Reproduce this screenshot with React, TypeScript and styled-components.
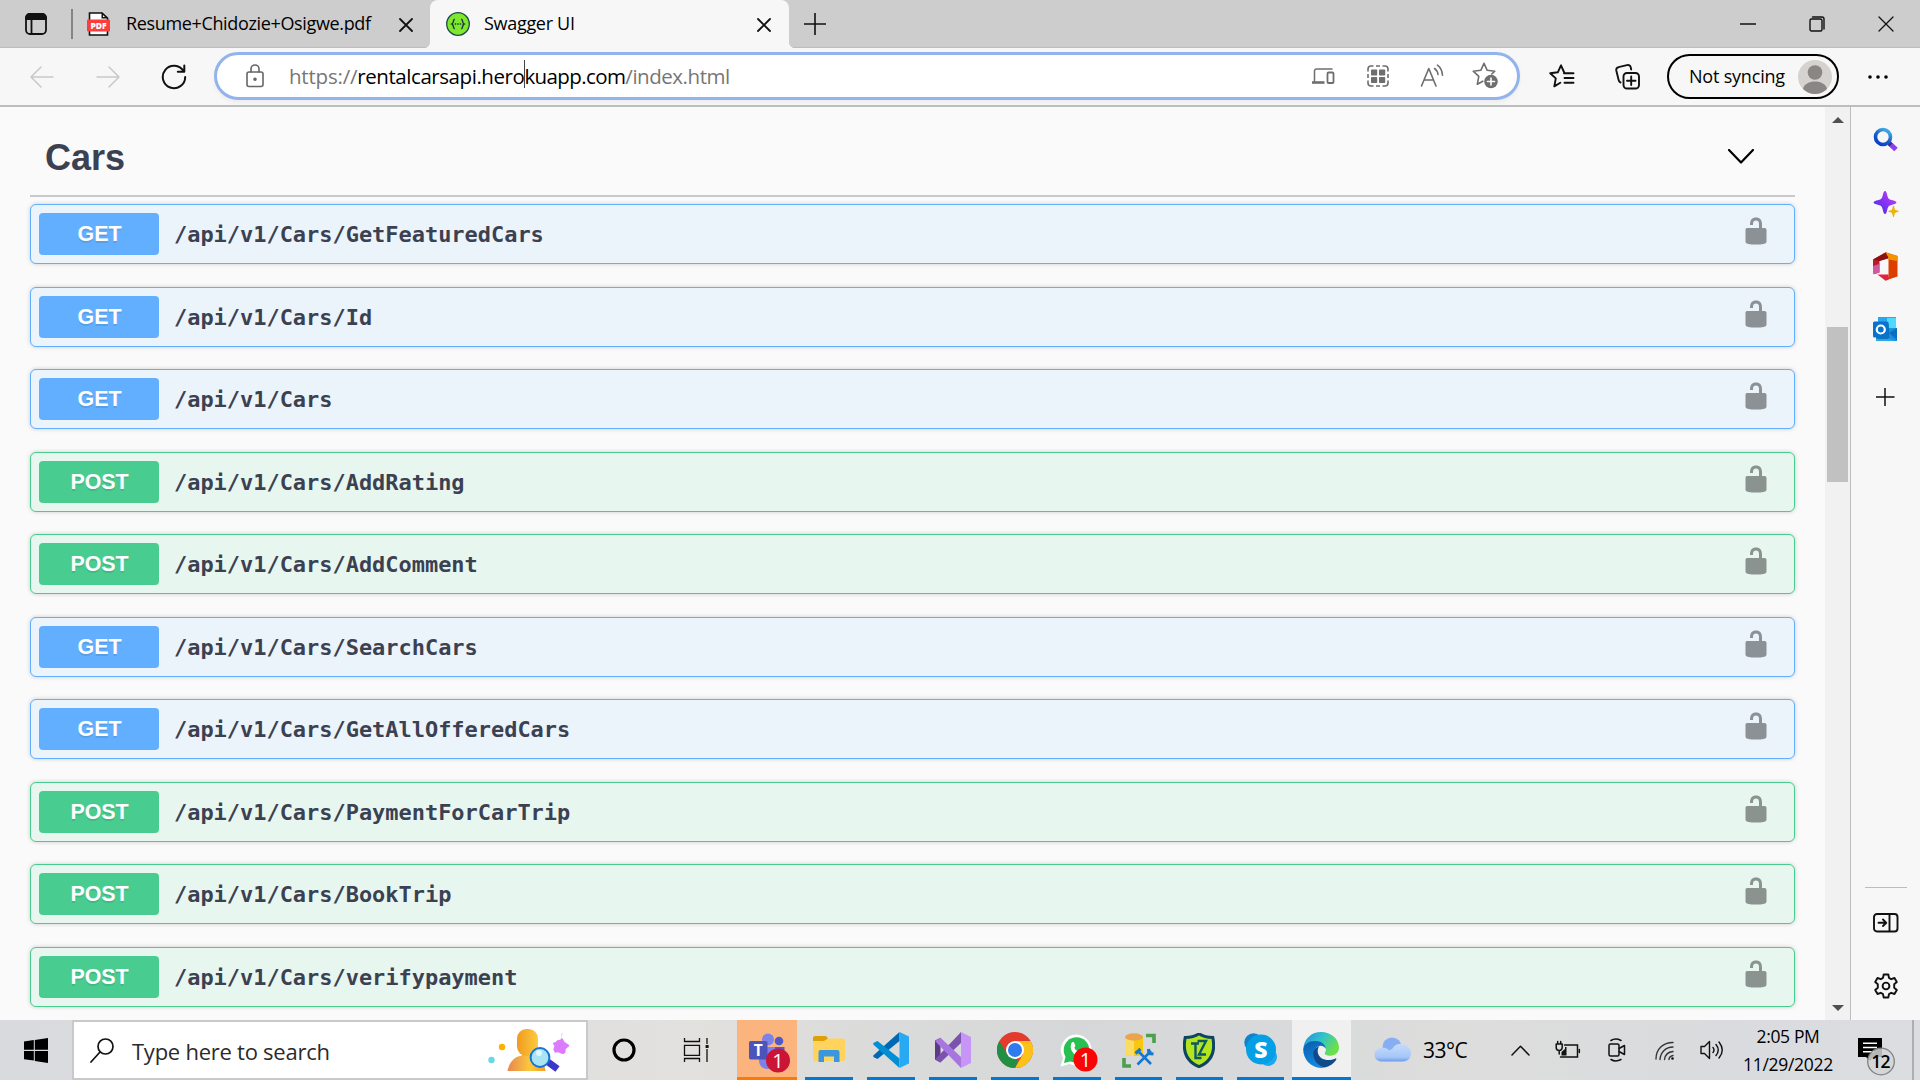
import React from "react";
import styled, { createGlobalStyle } from "styled-components";

const ui = `"Open Sans", "Noto Sans", sans-serif`;

const GlobalStyle = createGlobalStyle`
  *, *::before, *::after { box-sizing: border-box; }
  body { margin: 0; background: #fafafa; overflow: hidden; }
  svg { display: block; flex: none; }
`;

const Screen = styled.div`
  width: 1920px;
  height: 1080px;
  display: grid;
  grid-template-columns: 1920px;
  grid-template-rows: 48px 59px 913px 60px;
  font-family: ${ui};
  color: #000;
  overflow: hidden;
`;

const Slot = styled.div<{ $w: number; $drop?: number }>`
  width: ${(p) => p.$w}px;
  height: 100%;
  padding-top: ${(p) => p.$drop ?? 0}px;
  flex: none;
  display: flex;
  align-items: center;
  justify-content: center;
`;

const Label = styled.span<{ $size: number; $track?: number; $color?: string; $drop?: number }>`
  font-size: ${(p) => p.$size}px;
  letter-spacing: ${(p) => p.$track ?? 0}px;
  color: ${(p) => p.$color ?? "#000"};
  padding-top: ${(p) => p.$drop ?? 0}px;
  line-height: 1.3;
  white-space: pre;
`;

/* ---------- tab strip ---------- */

const TabStrip = styled.header`
  display: flex;
  align-items: center;
  background: #cdcdcd;
  box-shadow: inset 0 -2px 1px -1px #bcbcbc;
`;

const Divider = styled.div`
  width: 2px;
  height: 30px;
  background: #848484;
`;

const Tab = styled.div<{ $w: number; $active?: boolean; $pad: string; $gap: number }>`
  position: relative;
  width: ${(p) => p.$w}px;
  height: 48px;
  padding: ${(p) => p.$pad};
  display: flex;
  align-items: center;
  gap: ${(p) => p.$gap}px;
  border-radius: 8px 8px 0 0;
  background: ${(p) => (p.$active ? "#f7f7f7" : "transparent")};
  & > svg:last-child { margin-left: auto; margin-top: 2px; }
  ${(p) =>
    p.$active &&
    `&::before, &::after {
      content: "";
      position: absolute;
      bottom: 0;
      width: 5px;
      height: 5px;
    }
    &::before { left: -5px; background: radial-gradient(circle at 0 0, transparent 4.5px, #f7f7f7 5px); }
    &::after { right: -5px; background: radial-gradient(circle at 100% 0, transparent 4.5px, #f7f7f7 5px); }`}
`;

const Spacer = styled.div`
  flex: 1;
`;

/* ---------- toolbar ---------- */

const Toolbar = styled.nav`
  display: flex;
  align-items: center;
  padding-left: 9px;
  background: #f7f7f7;
  border-bottom: 2px solid #bdbdbd;
`;

const AddressBar = styled.div`
  width: 1306px;
  height: 48px;
  margin: 0 9px 2px 7px;
  padding: 0 5px 0 29px;
  display: flex;
  align-items: center;
  background: #fff;
  border: 3px solid #92b4ee;
  border-radius: 24px;
  box-shadow: 0 2px 4px rgba(0, 0, 0, 0.05);
`;

const Url = styled.div`
  flex: 1;
  display: flex;
  align-items: center;
  margin-left: 25px;
`;

const Caret = styled.i`
  width: 1px;
  height: 28px;
  margin: 0 -1px 3px 0;
  background: #444;
`;

const Profile = styled.div`
  width: 172px;
  height: 45px;
  display: flex;
  align-items: center;
  justify-content: space-between;
  padding: 0 5px 0 20px;
  border: 2px solid #000;
  border-radius: 23px;
  margin-left: 6px;
`;

/* ---------- page ---------- */

const Body = styled.main`
  display: flex;
  background: #fafafa;
`;

const Page = styled.section`
  width: 1825px;
  padding: 0 30px;
  overflow: hidden;
`;

const TagHeader = styled.div`
  height: 90px;
  display: flex;
  align-items: center;
  justify-content: space-between;
  padding: 10px 41px 0 15px;
  border-bottom: 2px solid #c8c8cf;
`;

const TagTitle = styled.h3`
  margin: 4px 0 0;
  font: bold 36px "Liberation Sans", Arial, sans-serif;
  color: #3b4151;
`;

const Operations = styled.div`
  display: flex;
  flex-direction: column;
  gap: 22.5px;
  padding-top: 7px;
`;

const Operation = styled.div<{ $post: boolean }>`
  height: 60px;
  display: flex;
  align-items: center;
  padding: 0 23px 0 8px;
  border: 1px solid ${(p) => (p.$post ? "#49cc90" : "#61affe")};
  border-radius: 6px;
  background: ${(p) => (p.$post ? "#e8f6f0" : "#ebf3fb")};
  box-shadow: 0 0 4px rgba(0, 0, 0, 0.19);
  & > svg { margin: -6px 0 0 auto; }
`;

const Method = styled.span<{ $post: boolean }>`
  width: 120px;
  height: 42px;
  padding: 1px 0 0 1px;
  display: flex;
  align-items: center;
  justify-content: center;
  border-radius: 4px;
  background: ${(p) => (p.$post ? "#49cc90" : "#61affe")};
  color: #fff;
  font: bold 21.4px "Liberation Sans", Arial, sans-serif;
  text-shadow: 0 2px 0 rgba(0, 0, 0, 0.1);
`;

const Path = styled.span`
  margin-left: 15px;
  padding-top: 1px;
  font: bold 21.95px "DejaVu Sans Mono", monospace;
  color: #3b4151;
`;

const Scrollbar = styled.div`
  width: 25px;
  padding: 10px 2px 9px;
  display: flex;
  flex-direction: column;
  align-items: center;
  background: #f1f1f1;
`;

const Thumb = styled.div`
  width: 21px;
  height: 155px;
  margin: 204px 0 auto;
  background: #c1c1c1;
`;

const Sidebar = styled.aside`
  width: 70px;
  display: flex;
  flex-direction: column;
  align-items: center;
  padding: 20px 0 20px 0;
  border-left: 1px solid #bdbdbd;
  background: #f7f7f7;
`;

const SideItem = styled.div<{ $h?: number }>`
  height: ${(p) => p.$h ?? 63}px;
  display: flex;
  align-items: flex-start;
  justify-content: center;
`;

const SideRule = styled.div`
  width: 42px;
  height: 1px;
  margin: auto 0 25px;
  background: #bdbdbd;
`;

/* ---------- taskbar ---------- */

const Taskbar = styled.footer`
  display: flex;
  align-items: center;
  background: linear-gradient(90deg, #d8dade 0, #dddee0 24%, #e3e1de 36%, #dcdcdb 43%, #d6d7d9 56%, #d9dadb 68%, #dddddc 76%, #d9dbde 90%, #dcdde0 100%);
`;

const SearchBox = styled.div`
  width: 516px;
  height: 60px;
  padding: 0 16px;
  display: flex;
  align-items: center;
  gap: 18px;
  background: #fff;
  border: 2px solid #c9c9c9;
  & > svg:last-child { margin-left: auto; }
`;

const TaskButton = styled.div<{ $w: number; $ml?: number; $bg?: string; $bar?: string; $pad?: string }>`
  width: ${(p) => p.$w}px;
  height: 60px;
  margin-left: ${(p) => p.$ml ?? 14}px;
  padding: ${(p) => p.$pad ?? "0"};
  flex: none;
  display: flex;
  align-items: center;
  justify-content: center;
  background: ${(p) => p.$bg ?? "transparent"};
  box-shadow: inset 0 -3px 0 ${(p) => p.$bar ?? "#0078d7"};
`;

const Weather = styled.div`
  width: 145px;
  padding-left: 23px;
  display: flex;
  align-items: center;
  gap: 11px;
`;

const Clock = styled.div`
  width: 106px;
  display: flex;
  flex-direction: column;
  align-items: center;
  gap: 5px;
`;

const DesktopEdge = styled.div`
  width: 8px;
  height: 60px;
  border-left: 2px solid #acaeb1;
`;

/* ---------- drawings ---------- */

type IcoProps = { w: number; h: number; sw?: number; color?: string; children: React.ReactNode };
const Ico = ({ w, h, sw = 1.6, color = "#111", children }: IcoProps) => (
  <svg width={w} height={h} viewBox={`0 0 ${w} ${h}`} fill="none" stroke={color} strokeWidth={sw} strokeLinecap="round" strokeLinejoin="round">
    {children}
  </svg>
);

const Cross = ({ s = 14, sw = 1.8 }) => (
  <Ico w={s} h={s} sw={sw}><path d={`M1 1L${s - 1} ${s - 1}M${s - 1} 1L1 ${s - 1}`} /></Ico>
);

const WorkspaceIcon = () => (
  <Ico w={22} h={22} sw={1.8}>
    <rect x="1" y="1" width="20" height="20" rx="4" />
    <path d="M1 6V5a4 4 0 0 1 4-4h12a4 4 0 0 1 4 4v1z" fill="#111" />
    <path d="M6.5 6v15" />
  </Ico>
);

const PdfIcon = () => (
  <svg width="23" height="24" viewBox="0 0 23 24">
    <path d="M2.5 1H15l5.5 5v17h-18z" fill="#fff" stroke="#111" strokeWidth="1.6" />
    <path d="M14.5 0v6.5H21z" fill="#111" />
    <path d="M16 3l2 2h-2z" fill="#fff" />
    <rect x="0" y="7.5" width="23" height="12" rx="1" fill="#fb3d3d" />
    <text x="11.5" y="16.5" textAnchor="middle" fontFamily="Open Sans" fontWeight="800" fontSize="8.5" fill="#fff">PDF</text>
  </svg>
);

const SwaggerIcon = () => (
  <svg width="24" height="24" viewBox="0 0 24 24" fill="none">
    <circle cx="12" cy="12" r="11.3" fill="#80e82c" stroke="#1c4a4a" strokeWidth="1.3" />
    <path d="M8.8 7.3C6.6 7.200 8.300 11 6 12c2.300 1 .6 4.800 2.800 4.700M15.200 7.300c2.200-.1.500 3.700 2.800 4.700-2.300 1-.6 4.800-2.800 4.700" stroke="#173647" strokeWidth="1.5" />
    <path d="M8.8 12h6.800" stroke="#173647" strokeWidth="1.5" strokeDasharray="1.4 1.1" />
  </svg>
);

const BackIcon = () => <Ico w={24} h={22} sw={1.5} color="#c9c9c9"><path d="M23 11H1.5M11 1L1 11l10 10" /></Ico>;
const ForwardIcon = () => <Ico w={24} h={22} sw={1.5} color="#c9c9c9"><path d="M1 11h21.5M13 1l10 10-10 10" /></Ico>;
const ReloadIcon = () => (
  <Ico w={26} h={26} sw={2}><path d="M22.6 7.2A11.2 11.2 0 1 0 24.2 13M23.3 1.5v6.2h-6.5" /></Ico>
);
const PadlockIcon = () => (
  <Ico w={18} h={24} sw={1.6} color="#666">
    <rect x="1" y="8" width="16" height="14.5" rx="2" /><path d="M5 8V5a4 4 0 0 1 8 0v3" />
    <circle cx="9" cy="15.2" r="1" fill="#666" />
  </Ico>
);
const DevicesIcon = () => (
  <Ico w={24} h={18} sw={1.8} color="#6e6e6e">
    <path d="M21 2H5.500a2 2 0 0 0-2 2v10" strokeWidth="1.500" />
    <path d="M1 15.500h12.500" strokeWidth="2.600" strokeLinecap="butt" />
    <rect x="16.500" y="5.500" width="6" height="10.500" rx="1" />
  </Ico>
);
const GridIcon = () => (
  <svg width="24" height="24" viewBox="0 0 24 24" fill="none" stroke="#6e6e6e" strokeWidth="1.600">
    <path d="M7.500 2H5a3 3 0 0 0-3 3v2.500M16.500 2H19a3 3 0 0 1 3 3v2.500M7.500 22H5a3 3 0 0 1-3-3v-2.500M16.500 22H19a3 3 0 0 0 3-3v-2.500M10 2h4M10 22h4M2 10v4M22 10v4" />
    <g fill="#6e6e6e" stroke="none">
      <rect x="5" y="5.500" width="6.200" height="6" rx=".8" /><rect x="13" y="5.500" width="6.200" height="6" rx=".8" />
      <rect x="5" y="13" width="6.200" height="6" rx=".8" /><rect x="13" y="13" width="6.200" height="6" rx=".8" />
    </g>
  </svg>
);
const ReadAloudIcon = () => (
  <Ico w={24} h={24} sw={1.6} color="#6e6e6e">
    <path d="M1.500 22L8.800 4.500 16 22M4 16h9.600M14.500 4.500q3 2 3.500 6M17.500 1.200q4.500 3.500 5 10" />
  </Ico>
);
const StarPlusIcon = () => (
  <Ico w={27} h={27} sw={1.6} color="#6e6e6e">
    <path d="M12 1.300l3.200 7 7.600.9-3 2.800M12 1.300l-3.200 7-7.600.9 5.600 5.200-1.500 7.800 5.500-3" />
    <circle cx="19" cy="19.500" r="6.800" fill="#6e6e6e" stroke="none" />
    <path d="M19 16v7M15.500 19.500h7" stroke="#fff" />
  </Ico>
);
const FavouritesIcon = () => (
  <Ico w={26} h={25} sw={1.900}>
    <path d="M15.200 8.500L12 1.300l-3.200 7-7.600.9 5.600 5.200-1.500 8 6-3.600M15 9.300h9.500M15.500 14h9M15.500 18.700h9" />
  </Ico>
);
const CollectionsIcon = () => (
  <Ico w={26} h={26} sw={1.900}>
    <rect x="8.500" y="9" width="15.500" height="15.500" rx="3.500" />
    <path d="M16.200 12.500v8.500M12 16.800h8.500M5.500 18.500C4 18 3.800 17 3.500 15.500L1.300 6.500C1 4.500 2 3.500 3.500 3.200L12 1.200c2-.5 3.300.4 3.700 2l.5 2.300" />
  </Ico>
);
const Avatar = () => (
  <svg width="34" height="34" viewBox="0 0 34 34">
    <circle cx="17" cy="17" r="17" fill="#d5d2cf" />
    <circle cx="17" cy="12.500" r="7.300" fill="#8a8683" />
    <path d="M5 29c1.500-10 22.500-10 24 0a17 17 0 0 1-24 0z" fill="#8a8683" />
  </svg>
);
const DotsIcon = () => (
  <svg width="20" height="4" viewBox="0 0 20 4"><circle cx="2" cy="2" r="1.800" /><circle cx="10" cy="2" r="1.800" /><circle cx="18" cy="2" r="1.800" /></svg>
);

const UnlockIcon = () => (
  <svg width="30" height="30" viewBox="0 0 20 20" opacity="0.4">
    <path d="M15.8 8H14V5.6C14 2.703 12.665 1 10 1 7.334 1 6 2.703 6 5.6V6h2v-.801C8 3.754 8.797 3 10 3c1.203 0 2 .754 2 2.199V8H4c-.553 0-1 .646-1 1.199V17c0 .549.428 1.139.951 1.307l1.197.387C5.672 18.861 6.55 19 7.1 19h5.8c.549 0 1.428-.139 1.951-.307l1.196-.387c.524-.167.953-.757.953-1.306V9.199C17 8.646 16.352 8 15.8 8z" />
  </svg>
);

const SideSearch = () => (
  <svg width="26" height="25" viewBox="0 0 26 25">
    <defs>
      <linearGradient id="ring" x1="0" y1="1" x2=".6" y2="0"><stop offset="0" stopColor="#0a35c4" /><stop offset=".6" stopColor="#1565d0" /><stop offset="1" stopColor="#41a4dd" /></linearGradient>
    </defs>
    <path d="M16 16l7 6.500" stroke="#8a3ff0" strokeWidth="5" strokeLinecap="butt" />
    <path d="M16 16l2 2" stroke="#3d2a8c" strokeWidth="4" />
    <circle cx="10" cy="10" r="7.500" fill="#f7f7f7" stroke="url(#ring)" strokeWidth="3.600" />
  </svg>
);
const SideSparkle = () => (
  <svg width="26" height="26" viewBox="0 0 26 26">
    <defs><linearGradient id="spark" x1="0" y1="1" x2="1" y2="0"><stop offset="0" stopColor="#3a2bf0" /><stop offset="1" stopColor="#d13bf5" /></linearGradient></defs>
    <path d="M12 0c1 0 1.800 1.500 2.400 5 .7 2.500 1.500 3.200 4 4 3.500.7 5 1.500 5 2.500s-1.500 1.700-5 2.400c-2.500.8-3.300 1.500-4 4-.6 3.500-1.400 5-2.400 5s-1.800-1.500-2.400-5c-.7-2.500-1.500-3.200-4-4-3.500-.7-5-1.400-5-2.400S2.100 9.700 5.600 9c2.500-.8 3.300-1.500 4-4C10.200 1.500 11 0 12 0z" fill="url(#spark)" />
    <path d="M20.500 14.500c1 0 .8 4 2 4.500 1 .6 3.300.4 3.300 1.300s-2.300.8-3.300 1.400c-1.200.6-1 4.300-2 4.300s-.8-3.700-2-4.300c-1-.6-3.300-.5-3.300-1.400s2.300-.7 3.300-1.300c1.200-.5 1-4.500 2-4.500z" fill="#f2b20c" />
  </svg>
);
const OfficeIcon = () => (
  <svg width="25" height="29" viewBox="0 0 25 29">
    <path d="M0 7.500L12.500.5l2.800 1v4.700L6.500 9v11.500L.8 22.300 0 20z" fill="#b81c2c" />
    <path d="M0 7.500L12.500.5l2.800 1v4.700L6.500 9z" fill="#8c1212" />
    <path d="M0 14l6.300-2v8.500L.8 22.300 0 20.500z" fill="#cf5aa2" />
    <path d="M12.500.3L24.500 4v20.500l-12 4 3-4V5.800z" fill="#dc3e00" />
    <path d="M12.500.3L24.500 4v5l-9-1.500V5.500z" fill="#f29400" />
    <path d="M4.500 22.500h11v5l-3 1.200z" fill="#e02440" />
  </svg>
);
const OutlookIcon = () => (
  <svg width="25" height="25" viewBox="0 0 25 25">
    <rect x="5" y="0" width="18" height="14" fill="#28a8ea" /><rect x="14" y="1" width="9" height="10" fill="#50d9ff" />
    <path d="M3 12l21-1v13H3z" fill="#1490df" /><path d="M16 16l8-5v12z" fill="#0f6cbd" /><path d="M3 17l20 7H3z" fill="#28a8ea" />
    <rect x="3" y="6" width="13" height="16" rx="2" fill="#0a4f8f" opacity=".6" />
    <rect x="0" y="4.500" width="15.500" height="16" rx="1.500" fill="#0872cf" />
    <circle cx="7.800" cy="12.500" r="4" fill="none" stroke="#fff" strokeWidth="2.200" />
  </svg>
);
const PanelIcon = () => (
  <Ico w={26} h={20} sw={1.900}>
    <rect x="1" y="1" width="23.500" height="17.500" rx="3" /><path d="M16.500 1v17M5.500 9.800h7.500M10 6.500l3.300 3.300L10 13" />
  </Ico>
);
const GearIcon = () => (
  <Ico w={26} h={26} sw={1.900}>
    <circle cx="13" cy="13" r="3.400" />
    <path d="M10.700 1.500h4.600l.7 3.400 2.200 1.300 3.300-1.200 2.300 4-2.600 2.300v3.400l2.600 2.300-2.300 4-3.300-1.200-2.200 1.300-.7 3.400h-4.600l-.7-3.400-2.200-1.300L4.500 21l-2.300-4 2.600-2.300v-3.400L2.200 9l2.300-4 3.300 1.200L10 4.900z" />
  </Ico>
);

const WindowsIcon = () => (
  <svg width="24" height="25" viewBox="0 0 24 25">
    <path d="M0 3.500l9.800-1.400v9.700H0zM10.800 2L24 0v11.800H10.800zM0 12.900h9.800v9.700L0 21.300zM10.800 12.900H24V25l-13.200-2z" />
  </svg>
);
const Person = () => (
  <svg width="82" height="44" viewBox="0 0 82 44">
    <defs>
      <linearGradient id="body" x1="0" x2="1"><stop offset="0" stopColor="#e8874e" /><stop offset=".6" stopColor="#fbc93c" /><stop offset="1" stopColor="#f59a2d" /></linearGradient>
      <linearGradient id="head" x1="0" x2="1"><stop offset="0" stopColor="#f09a20" /><stop offset="1" stopColor="#fccb3e" /></linearGradient>
    </defs>
    <circle cx="14" cy="19" r="3.200" fill="#ffb000" /><circle cx="3.500" cy="32" r="3.200" fill="#6ad6e6" />
    <path d="M19.500 43c2-10 8-14.500 13-15q3-1 1-4h11q-2 3 1 4c6 1 11 6 12 15z" fill="url(#body)" />
    <rect x="29" y="1" width="21" height="27" rx="9.500" fill="url(#head)" />
    <path d="M60 34l9.500 7" stroke="#3b37c9" strokeWidth="7" />
    <circle cx="52" cy="29.500" r="9.400" fill="#a9e4f4" stroke="#1673d8" strokeWidth="2" />
    <circle cx="51" cy="25" r="3" fill="#e3f8fc" />
    <path d="M73.500 10.500q1.500-.5 2 1.500t2.500 3 3 2-1.500 2.500-2 3-.5 2.500-2 1-3-1-3.500-.5-2-.5-1-2 .5-2.500-.5-3 .5-2 2.500-1.500 2.500-1 2.500-2.500 0-2.500 1-2.500z" fill="#dd7bff" />
  </svg>
);
const TaskViewIcon = () => (
  <Ico w={26} h={24} sw={1.300}>
    <path d="M1.500 0v3.500h15V0M1.500 24v-3.500h15V24M1.500 7.300h15v10h-15zM24 0v6M24 11v13" strokeLinecap="butt" strokeLinejoin="miter" />
    <rect x="22.600" y="7" width="3" height="3" fill="#111" stroke="none" />
  </Ico>
);
const Count = ({ cx, cy, color }: { cx: number; cy: number; color: string }) => (
  <>
    <circle cx={cx} cy={cy} r="12" fill={color} />
    <text x={cx} y={cy + 7} textAnchor="middle" fontFamily="Open Sans" fontSize="20" fill="#fff">1</text>
  </>
);
const TeamsIcon = () => (
  <svg width="40" height="40" viewBox="0 0 40 40" overflow="visible">
    <circle cx="19" cy="6.500" r="6" fill="#7b83eb" /><circle cx="30" cy="8" r="4.300" fill="#5059c9" />
    <path d="M24 14h11.500v10a6 6 0 0 1-11.500 3z" fill="#5059c9" />
    <path d="M10 14h16v14a8 8 0 0 1-16 0z" fill="#7b83eb" />
    <rect x="0" y="8" width="18.500" height="18.500" rx="1.800" fill="#4b53bc" />
    <text x="9.200" y="23" textAnchor="middle" fontFamily="Open Sans" fontWeight="700" fontSize="15.500" fill="#fff">T</text>
    <Count cx={29} cy={27.500} color="#cc1436" />
  </svg>
);
const ExplorerIcon = () => (
  <svg width="32" height="28" viewBox="0 0 32 28">
    <path d="M0 2a2 2 0 0 1 2-2h11l2 2.500-3 5H0z" fill="#dfa007" />
    <path d="M0 5h11l4-2.500h15a2 2 0 0 1 2 2V23a2 2 0 0 1-2 2H2a2 2 0 0 1-2-2z" fill="#ffd35c" />
    <path d="M5.500 26V16a2 2 0 0 1 2-2h17a2 2 0 0 1 2 2v10h-5.500v-5.500H11V26z" fill="#3a96dd" />
  </svg>
);
const VsCodeIcon = () => (
  <svg width="36" height="36" viewBox="0 0 36 36">
    <path d="M26.500 0v9L4.500 27 .8 25.200a1.500 1.500 0 0 1 0-2.200z" fill="#0069b3" />
    <path d="M26.500 36v-9.500L4.500 9 .8 10.800a1.500 1.500 0 0 0 0 2.200z" fill="#008fd5" />
    <path d="M26.500 0L36 4.500v27L26.500 36z" fill="#27aaf2" />
  </svg>
);
const VisualStudioIcon = () => (
  <svg width="36" height="36" viewBox="0 0 36 36">
    <path d="M0 8.500l5.500-2.700v24.700L0 27.500z" fill="#5c3a86" />
    <path d="M26 0v11L5.500 30.500 0 27.500z" fill="#7b52ae" />
    <path d="M5.500 5.800L26 25v11L0 9z" fill="#a775e0" />
    <path d="M26 0l10 5v26l-10 5z" fill="#c794f7" />
  </svg>
);
const ChromeIcon = () => (
  <svg width="36" height="36" viewBox="0 0 36 36">
    <circle cx="18" cy="18" r="18" fill="#e33b2e" />
    <path d="M18 9h15.600A18 18 0 0 1 18 36l7.800-13.500z" fill="#fdc21a" />
    <path d="M2.400 9l7.800 13.500L18 27l4 0L18 36A18 18 0 0 1 2.400 9z" fill="#209144" />
    <circle cx="18" cy="18" r="9" fill="#fff" /><circle cx="18" cy="18" r="7" fill="#2f7bee" />
  </svg>
);
const WhatsAppIcon = () => (
  <svg width="38" height="38" viewBox="0 0 38 38">
    <path d="M16.500.5a15.500 15.500 0 1 1-7 29.500L.5 32.500l2.600-8.500A15.500 15.500 0 0 1 16.500.5z" fill="#fff" />
    <circle cx="16.500" cy="16" r="12.800" fill="#28c052" /><path d="M4 29l2-8 6 6z" fill="#28c052" />
    <path d="M11.500 9c1-1.500 2.500-1 3 .5l.8 2c.3 1-.9 1.600-1 2.300 1 2 2.600 3.500 4.800 4.400l1.600-1.500 4 2c0 4-4 5-7 3.600-4-1.700-9-7.300-6.200-13.300z" fill="#fff" />
    <Count cx={25.500} cy={25.500} color="#f90505" />
  </svg>
);
const SqlToolsIcon = () => (
  <svg width="34" height="35" viewBox="0 0 34 35">
    <path d="M3 4v16.500c0 3.500 18 3.500 18 0V4z" fill="#f9c80e" /><path d="M3 4v16.500c0 1.500 4 2.500 9 2.600V4z" fill="#fbdc63" />
    <ellipse cx="12" cy="4" rx="9" ry="3.700" fill="#e9a44e" />
    <path d="M24 2.500h8v7.500M2 25v8h7" fill="none" stroke="#4c9f4c" strokeWidth="3.600" />
    <path d="M16 18l13 13M29 18l-13.500 13.500" stroke="#1478d0" strokeWidth="2.600" />
    <path d="M13.500 20.500l5-4.500M26.500 16l.5 4.500 4.500.5" fill="none" stroke="#1478d0" strokeWidth="3.200" />
  </svg>
);
const ShieldIcon = () => (
  <svg width="32" height="35" viewBox="0 0 32 35">
    <path d="M16 .8C11.500 3.800 6.500 4.500 2.200 4.500c-2 10-1.500 23 13.800 29.200C31.300 27.500 31.800 14.500 29.800 4.500 25.500 4.500 20.500 3.800 16 .8z" fill="#b4e61e" stroke="#0e4560" strokeWidth="3" />
    <path d="M8 10.500h8M12.500 10.500V25h6M14.500 8h8.500L16 21.500h7" fill="none" stroke="#0e5a63" strokeWidth="2.400" />
  </svg>
);
const SkypeIcon = () => (
  <svg width="34" height="34" viewBox="0 0 34 34">
    <circle cx="9.500" cy="9.500" r="9.200" fill="#0e84cc" /><circle cx="24" cy="24" r="9" fill="#1aa9ea" /><circle cx="17" cy="16.500" r="15" fill="#049fe4" />
    <text x="17" y="25" textAnchor="middle" fontFamily="Open Sans" fontWeight="800" fontSize="23" fill="#fff">S</text>
  </svg>
);
const EdgeIcon = () => (
  <svg width="36" height="36" viewBox="0 0 36 36">
    <defs>
      <linearGradient id="edgeTop" x1="0" y1="0" x2="1" y2=".5"><stop offset="0" stopColor="#1f8fd8" /><stop offset=".5" stopColor="#31c0cf" /><stop offset="1" stopColor="#6be04a" /></linearGradient>
      <linearGradient id="edgeLeft" x1="0" y1="0" x2=".4" y2="1"><stop offset="0" stopColor="#0a5cad" /><stop offset="1" stopColor="#1489e0" /></linearGradient>
    </defs>
    <path d="M.5 15C2 6 9 0 18 0c10 0 18 7 18 15.500 0 5-3.800 8.200-8.500 8.200-4 0-6-1.700-5.800-2.500.3-1 1.300-1.500 1.300-4 0-3-3.500-6.500-9-6.500C8 10.700 3 13 .5 15z" fill="url(#edgeTop)" />
    <path d="M.2 17C.8 12.500 6 9 12 9c6.500 0 10.500 3.500 11 8-1-2-3-3.300-5.500-3.300-4 0-6.500 3.800-6.500 8C11 29 16.500 34.500 21 35.700 9 37.500 0 28 .2 17z" fill="url(#edgeLeft)" />
    <path d="M16.500 14C12 15.500 9.500 19 10.500 24c1 6 6 11 11 11.500 5-1 9.500-4 11.800-8 .4-1-.4-1.300-1-.9C25 30 16 27.500 14.800 20.500c-.4-2.500.2-4.900 1.700-6.500z" fill="#114a8b" />
  </svg>
);
const CloudIcon = () => (
  <svg width="38" height="25" viewBox="0 0 38 25">
    <defs><linearGradient id="cloud" x1="0" y1="0" x2="0" y2="1"><stop offset="0" stopColor="#c7dcfb" /><stop offset=".75" stopColor="#a6c6f8" /><stop offset="1" stopColor="#6d9cec" /></linearGradient></defs>
    <circle cx="18" cy="10" r="9.500" fill="#86aef3" />
    <path d="M7.500 11c3-1 6 .5 8 2.500l3-2c1.500-3 4.500-5 8.500-4.500 1 0 10 1 10 9.500 0 5-4 8-8 8H8c-4 0-7.500-2.500-7.500-6.500S3.500 11.500 7.500 11z" fill="url(#cloud)" />
  </svg>
);
const BatteryIcon = () => (
  <Ico w={26} h={20} sw={1.500}>
    <path d="M9.500 5h13v12H5.500" strokeLinejoin="miter" /><path d="M24.300 9.500v3" />
    <path d="M6.500 15.500v-3.500l3.500-3V7h1.500v8.500z" fill="#111" stroke="none" />
    <path d="M1.200 4h6v3.500a3 3 0 0 1-6 0zM2.700 1.500V4M5.700 1.500V4M4.200 10.500V14" />
  </Ico>
);
const MeetIcon = () => (
  <Ico w={18} h={24} sw={1.500}>
    <rect x="1" y="6" width="10" height="12" rx="1.500" /><path d="M11 10.500l5.500-3v9l-5.500-3M3 2.500q4.500-2.800 10 0M3 21.500q4.500 2.800 10 0" />
  </Ico>
);
const WifiIcon = () => (
  <Ico w={20} h={20} sw={1.400} color="#333">
    <path d="M1 18C1 8 8 1.500 18 1.500M5 18.500C5.500 11 11 6 18 6M9.500 18.500C10 14.500 13 11 18 10.500M14 18.500c0-1.500 1.500-3.500 4-4" />
    <circle cx="17.500" cy="17.500" r="1.300" fill="#111" stroke="none" />
  </Ico>
);
const SoundIcon = () => (
  <Ico w={24} h={20} sw={1.400}>
    <path d="M1 6.500h3.500L9.500 1.500v17L4.500 13.500H1zM13 7.500q2 2.500 0 5M16 4.500q4.500 5.500 0 11M19 2q6.500 8 0 16" />
  </Ico>
);
const NotificationIcon = () => (
  <svg width="40" height="38" viewBox="0 0 40 38">
    <path d="M1 0h24v19H16l-3 4-4-4H1z" />
    <path d="M6 5.200h14M6 9.500h14M6 13.700h11" stroke="#fff" strokeWidth="1.400" />
    <circle cx="24" cy="23.500" r="13.300" fill="#d4d5d6" fillOpacity=".85" stroke="#808080" strokeWidth="1.300" />
    <text x="23.500" y="30" textAnchor="middle" fontFamily="Open Sans" fontWeight="600" fontSize="17.500" letterSpacing="-0.8">12</text>
  </svg>
);

const operations: [string, string][] = [
  ["GET", "GetFeaturedCars"],
  ["GET", "Id"],
  ["GET", ""],
  ["POST", "AddRating"],
  ["POST", "AddComment"],
  ["GET", "SearchCars"],
  ["GET", "GetAllOfferedCars"],
  ["POST", "PaymentForCarTrip"],
  ["POST", "BookTrip"],
  ["POST", "verifypayment"],
];

const BrowserTabs = () => (
  <TabStrip>
    <Slot $w={71}><WorkspaceIcon /></Slot>
    <Divider />
    <Tab $w={357} $pad="0 17px 0 14px" $gap={16}>
      <PdfIcon />
      <Label $size={18} $track={-0.35}>Resume+Chidozie+Osigwe.pdf</Label>
      <Cross />
    </Tab>
    <Tab $w={359} $active $pad="0 18px 0 16px" $gap={14}>
      <SwaggerIcon />
      <Label $size={18} $track={-0.3}>Swagger UI</Label>
      <Cross />
    </Tab>
    <Slot $w={52}><Ico w={22} h={22} sw={1.600}><path d="M11 0v22M0 11h22" /></Ico></Slot>
    <Spacer />
    <Slot $w={69}><Ico w={16} h={2} sw={1.400}><path d="M0 1h16" /></Ico></Slot>
    <Slot $w={69}>
      <Ico w={16} h={16} sw={1.400}><rect x="1" y="3" width="12" height="12" rx="1.500" /><path d="M3.500 1H13a2 2 0 0 1 2 2v10" /></Ico>
    </Slot>
    <Slot $w={69}><Cross s={16} sw={1.300} /></Slot>
  </TabStrip>
);

const BrowserToolbar = () => (
  <Toolbar>
    <Slot $w={66}><BackIcon /></Slot>
    <Slot $w={66}><ForwardIcon /></Slot>
    <Slot $w={66}><ReloadIcon /></Slot>
    <AddressBar>
      <PadlockIcon />
      <Url>
        <Label $size={20.500} $track={-0.2} $drop={2} $color="#767676">https://</Label>
        <Label $size={20.500} $track={-0.44} $drop={2}>rentalcarsapi.hero</Label>
        <Caret />
        <Label $size={20.500} $track={-0.6} $drop={2}>kuapp.com</Label>
        <Label $size={20.500} $track={-0.46} $drop={2} $color="#767676">/index.html</Label>
      </Url>
      <Slot $w={54}><DevicesIcon /></Slot>
      <Slot $w={55}><GridIcon /></Slot>
      <Slot $w={54}><ReadAloudIcon /></Slot>
      <Slot $w={53}><StarPlusIcon /></Slot>
    </AddressBar>
    <Slot $w={66}><FavouritesIcon /></Slot>
    <Slot $w={66}><CollectionsIcon /></Slot>
    <Profile>
      <Label $size={18} $track={-0.2} $drop={1}>Not syncing</Label>
      <Avatar />
    </Profile>
    <Slot $w={78}><DotsIcon /></Slot>
  </Toolbar>
);

export default function App() {
  return (
    <Screen>
      <GlobalStyle />
      <BrowserTabs />
      <BrowserToolbar />
      <Body>
        <Page>
          <TagHeader>
            <TagTitle>Cars</TagTitle>
            <Ico w={26} h={15} sw={2.200} color="#000"><path d="M1 1l12 12.500L25 1" /></Ico>
          </TagHeader>
          <Operations>
            {operations.map(([method, name]) => (
              <Operation key={name} $post={method === "POST"}>
                <Method $post={method === "POST"}>{method}</Method>
                <Path>{name ? `/api/v1/Cars/${name}` : "/api/v1/Cars"}</Path>
                <UnlockIcon />
              </Operation>
            ))}
          </Operations>
        </Page>
        <Scrollbar>
          <svg width="12" height="6" viewBox="0 0 12 6"><path d="M6 0l6 6H0z" fill="#505050" /></svg>
          <Thumb />
          <svg width="12" height="6" viewBox="0 0 12 6"><path d="M6 6L0 0h12z" fill="#505050" /></svg>
        </Scrollbar>
        <Sidebar>
          <SideItem $h={64}><SideSearch /></SideItem>
          <SideItem $h={61}><SideSparkle /></SideItem>
          <SideItem $h={65}><OfficeIcon /></SideItem>
          <SideItem $h={71}><OutlookIcon /></SideItem>
          <SideItem $h={20}><Ico w={19} h={18} sw={1.500}><path d="M9 0v18M0 9h18" /></Ico></SideItem>
          <SideRule />
          <SideItem $h={60}><PanelIcon /></SideItem>
          <SideItem $h={27}><GearIcon /></SideItem>
        </Sidebar>
      </Body>
      <Taskbar>
        <Slot $w={72}><WindowsIcon /></Slot>
        <SearchBox>
          <Ico w={24} h={25} sw={1.700}><circle cx="15.500" cy="8.500" r="7.500" /><path d="M10 14L1 24" /></Ico>
          <Label $size={22} $track={-0.25} $drop={2} $color="#2b2b2b">Type here to search</Label>
          <Person />
        </SearchBox>
        <Slot $w={72}><Ico w={24} h={24} sw={3.200} color="#000"><circle cx="12" cy="12" r="10" /></Ico></Slot>
        <Slot $w={72}><TaskViewIcon /></Slot>
        <TaskButton $w={60} $ml={5} $bg="#fbb47d" $bar="#ff7800" $pad="6px 0 0 4px"><TeamsIcon /></TaskButton>
        <TaskButton $w={48} $ml={8}><ExplorerIcon /></TaskButton>
        <TaskButton $w={48}><VsCodeIcon /></TaskButton>
        <TaskButton $w={48}><VisualStudioIcon /></TaskButton>
        <TaskButton $w={48}><ChromeIcon /></TaskButton>
        <TaskButton $w={48} $pad="5px 0 0 4px"><WhatsAppIcon /></TaskButton>
        <TaskButton $w={47}><SqlToolsIcon /></TaskButton>
        <TaskButton $w={47} $pad="0 2px 0 0"><ShieldIcon /></TaskButton>
        <TaskButton $w={47}><SkypeIcon /></TaskButton>
        <TaskButton $w={59} $ml={8} $bg="#f0f0f0" $pad="0 1px 0 0"><EdgeIcon /></TaskButton>
        <Weather>
          <CloudIcon />
          <Label $size={21} $track={-0.5} $drop={2}>33°C</Label>
        </Weather>
        <Slot $w={48}><Ico w={19} h={11} sw={1.500}><path d="M1 10L9.500 1.200 18 10" /></Ico></Slot>
        <Slot $w={48}><BatteryIcon /></Slot>
        <Slot $w={49}><MeetIcon /></Slot>
        <Slot $w={48} $drop={2}><WifiIcon /></Slot>
        <Slot $w={46}><SoundIcon /></Slot>
        <Clock>
          <Label $size={17.500} $track={-0.35}>2:05 PM</Label>
          <Label $size={17.500} $track={-0.3}>11/29/2022</Label>
        </Clock>
        <Slot $w={71} $drop={13}><NotificationIcon /></Slot>
        <DesktopEdge />
      </Taskbar>
    </Screen>
  );
}
